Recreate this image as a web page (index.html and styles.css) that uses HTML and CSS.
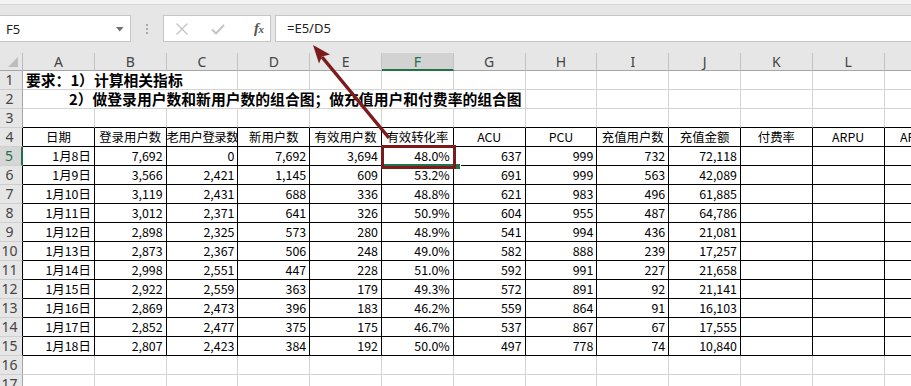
FILE: index.html
```html
<!DOCTYPE html>
<html lang="zh-CN">
<head>
<meta charset="utf-8">
<title>Excel</title>
<link rel="stylesheet" href="styles.css">
</head>
<body>
<div class="page">
  <div class="topstrip"></div>
  <div class="fbar">
    <div class="namebox">
      <span class="nb-text">F5</span>
      <svg class="nb-drop" width="8" height="5" viewBox="0 0 8 5"><path d="M0 0H7.5L3.75 4.5Z" fill="#6f6f6f"/></svg>
    </div>
    <div class="grip"><i></i><i></i><i></i></div>
    <div class="btnbox">
      <svg class="ico" width="14" height="12" viewBox="0 0 14 12"><path d="M1.5 0.5L12.5 11.5M12.5 0.5L1.5 11.5" stroke="#c4c4c4" stroke-width="1.3" fill="none"/></svg>
      <svg class="ico" width="14" height="12" viewBox="0 0 14 12"><path d="M1 6.5L5 10.5L13 2" stroke="#c4c4c4" stroke-width="2" fill="none"/></svg>
      <span class="fx">f<span class="fx-x">x</span></span>
    </div>
    <div class="formula">=E5/D5</div>
  </div>

  <div class="sheet">
    <!-- column headers -->
    <div class="corner"><svg width="10" height="10" viewBox="0 0 10 10"><path d="M10 0V10H0Z" fill="#bdbdbd"/></svg></div>
    <div class="ch">A</div><div class="ch">B</div><div class="ch">C</div><div class="ch">D</div><div class="ch">E</div><div class="ch sel">F</div><div class="ch">G</div><div class="ch">H</div><div class="ch">I</div><div class="ch">J</div><div class="ch">K</div><div class="ch">L</div><div class="ch">M</div>

    <!-- row 1 -->
    <div class="rh">1</div>
    <div class="c title s3">要求：1）计算相关指标</div>
    <div class="c"></div><div class="c"></div><div class="c"></div><div class="c"></div><div class="c"></div><div class="c"></div><div class="c"></div><div class="c"></div><div class="c"></div><div class="c"></div>

    <!-- row 2 -->
    <div class="rh">2</div>
    <div class="c title s7 indent">2）做登录用户数和新用户数的组合图；做充值用户和付费率的组合图</div>
    <div class="c"></div><div class="c"></div><div class="c"></div><div class="c"></div><div class="c"></div><div class="c"></div>

    <!-- row 3 -->
    <div class="rh">3</div>
    <div class="c tb"></div><div class="c tb"></div><div class="c tb"></div><div class="c tb"></div><div class="c tb"></div><div class="c tb"></div><div class="c tb"></div><div class="c tb"></div><div class="c tb"></div><div class="c tb"></div><div class="c tb"></div><div class="c tb"></div><div class="c tb"></div>

    <!-- row 4 -->
    <div class="rh tl">4</div>
    <div class="t ctr">日期</div><div class="t ctr">登录用户数</div><div class="t ctr tight">老用户登录数</div><div class="t ctr">新用户数</div><div class="t ctr">有效用户数</div><div class="t ctr">有效转化率</div><div class="t ctr">ACU</div><div class="t ctr">PCU</div><div class="t ctr">充值用户数</div><div class="t ctr">充值金额</div><div class="t ctr">付费率</div><div class="t ctr">ARPU</div><div class="t ctr">ARPPU</div>

    <!-- row 5 -->
    <div class="rh tl rsel">5</div>
    <div class="t r">1月8日</div><div class="t r">7,692</div><div class="t r">0</div><div class="t r">7,692</div><div class="t r">3,694</div><div class="t r">48.0%</div><div class="t r">637</div><div class="t r">999</div><div class="t r">732</div><div class="t r">72,118</div><div class="t"></div><div class="t"></div><div class="t"></div>

    <div class="rh tl">6</div>
    <div class="t r">1月9日</div><div class="t r">3,566</div><div class="t r">2,421</div><div class="t r">1,145</div><div class="t r">609</div><div class="t r">53.2%</div><div class="t r">691</div><div class="t r">999</div><div class="t r">563</div><div class="t r">42,089</div><div class="t"></div><div class="t"></div><div class="t"></div>

    <div class="rh tl">7</div>
    <div class="t r">1月10日</div><div class="t r">3,119</div><div class="t r">2,431</div><div class="t r">688</div><div class="t r">336</div><div class="t r">48.8%</div><div class="t r">621</div><div class="t r">983</div><div class="t r">496</div><div class="t r">61,885</div><div class="t"></div><div class="t"></div><div class="t"></div>

    <div class="rh tl">8</div>
    <div class="t r">1月11日</div><div class="t r">3,012</div><div class="t r">2,371</div><div class="t r">641</div><div class="t r">326</div><div class="t r">50.9%</div><div class="t r">604</div><div class="t r">955</div><div class="t r">487</div><div class="t r">64,786</div><div class="t"></div><div class="t"></div><div class="t"></div>

    <div class="rh tl">9</div>
    <div class="t r">1月12日</div><div class="t r">2,898</div><div class="t r">2,325</div><div class="t r">573</div><div class="t r">280</div><div class="t r">48.9%</div><div class="t r">541</div><div class="t r">994</div><div class="t r">436</div><div class="t r">21,081</div><div class="t"></div><div class="t"></div><div class="t"></div>

    <div class="rh tl">10</div>
    <div class="t r">1月13日</div><div class="t r">2,873</div><div class="t r">2,367</div><div class="t r">506</div><div class="t r">248</div><div class="t r">49.0%</div><div class="t r">582</div><div class="t r">888</div><div class="t r">239</div><div class="t r">17,257</div><div class="t"></div><div class="t"></div><div class="t"></div>

    <div class="rh tl">11</div>
    <div class="t r">1月14日</div><div class="t r">2,998</div><div class="t r">2,551</div><div class="t r">447</div><div class="t r">228</div><div class="t r">51.0%</div><div class="t r">592</div><div class="t r">991</div><div class="t r">227</div><div class="t r">21,658</div><div class="t"></div><div class="t"></div><div class="t"></div>

    <div class="rh tl">12</div>
    <div class="t r">1月15日</div><div class="t r">2,922</div><div class="t r">2,559</div><div class="t r">363</div><div class="t r">179</div><div class="t r">49.3%</div><div class="t r">572</div><div class="t r">891</div><div class="t r">92</div><div class="t r">21,141</div><div class="t"></div><div class="t"></div><div class="t"></div>

    <div class="rh tl">13</div>
    <div class="t r">1月16日</div><div class="t r">2,869</div><div class="t r">2,473</div><div class="t r">396</div><div class="t r">183</div><div class="t r">46.2%</div><div class="t r">559</div><div class="t r">864</div><div class="t r">91</div><div class="t r">16,103</div><div class="t"></div><div class="t"></div><div class="t"></div>

    <div class="rh tl">14</div>
    <div class="t r">1月17日</div><div class="t r">2,852</div><div class="t r">2,477</div><div class="t r">375</div><div class="t r">175</div><div class="t r">46.7%</div><div class="t r">537</div><div class="t r">867</div><div class="t r">67</div><div class="t r">17,555</div><div class="t"></div><div class="t"></div><div class="t"></div>

    <div class="rh tl">15</div>
    <div class="t r">1月18日</div><div class="t r">2,807</div><div class="t r">2,423</div><div class="t r">384</div><div class="t r">192</div><div class="t r">50.0%</div><div class="t r">497</div><div class="t r">778</div><div class="t r">74</div><div class="t r">10,840</div><div class="t"></div><div class="t"></div><div class="t"></div>

    <!-- row 16 -->
    <div class="rh">16</div>
    <div class="c"></div><div class="c"></div><div class="c"></div><div class="c"></div><div class="c"></div><div class="c"></div><div class="c"></div><div class="c"></div><div class="c"></div><div class="c"></div><div class="c"></div><div class="c"></div><div class="c"></div>

    <!-- row 17 -->
    <div class="rh">17</div>
    <div class="c"></div><div class="c"></div><div class="c"></div><div class="c"></div><div class="c"></div><div class="c"></div><div class="c"></div><div class="c"></div><div class="c"></div><div class="c"></div><div class="c"></div><div class="c"></div><div class="c"></div>
  </div>

  <!-- overlays: selection of F5, annotation box and arrow -->
  <div class="selbar"></div>
  <div class="handle"></div>
  <div class="redbox"></div>
  <svg class="arrow" width="911" height="386" viewBox="0 0 911 386">
    <line x1="389" y1="138" x2="322" y2="57" stroke="#7a1c1c" stroke-width="3.5"/>
    <path d="M313 45L330 54.4L322 56.5L319 63.4Z" fill="#7a1c1c"/>
  </svg>
</div>
</body>
</html>
```

FILE: styles.css
```css
html, body {
  margin: 0;
  padding: 0;
  background: #ffffff;
}

.page {
  position: relative;
  width: 911px;
  height: 386px;
  overflow: hidden;
  font-family: "Noto Sans CJK SC", "Noto Sans", sans-serif;
}

/* ---------- top toolbar ---------- */
.topstrip {
  height: 4px;
  background: #f3f3f3;
  border-bottom: 1px solid #d6d6d6;
}

.fbar {
  height: 48px;
  box-sizing: border-box;
  padding-top: 10px;
  background: #e6e6e6;
  display: flex;
  align-items: flex-start;
}

.namebox,
.btnbox,
.formula {
  height: 27px;
  box-sizing: border-box;
  background: #ffffff;
  border: 1px solid #c6c6c6;
}

.namebox {
  width: 131px;
  border-left: none;
  display: flex;
  align-items: center;
  justify-content: space-between;
  padding: 0 6px 0 6px;
}

.nb-text {
  font-family: "Noto Sans", sans-serif;
  font-size: 13px;
  color: #222;
}

.nb-drop {
  margin-top: 1px;
}

.grip {
  width: 32px;
  height: 27px;
  display: flex;
  flex-direction: column;
  align-items: center;
  justify-content: center;
  gap: 2px;
}

.grip i {
  display: block;
  width: 2px;
  height: 2px;
  background: #a9a9a9;
}

.btnbox {
  width: 108px;
  display: flex;
  align-items: center;
  padding-left: 11px;
  gap: 22px;
}

.fx {
  font-family: "Liberation Serif", serif;
  font-style: italic;
  font-weight: bold;
  font-size: 15px;
  color: #555;
  margin-left: 7px;
  letter-spacing: -0.5px;
}

.fx-x {
  font-size: 11px;
}

.formula {
  flex: 1;
  margin-left: 4px;
  border-right: none;
  padding-left: 11px;
  font-family: "Noto Sans", sans-serif;
  font-size: 13px;
  line-height: 25px;
  color: #222;
}

/* ---------- sheet grid ---------- */
.sheet {
  display: grid;
  grid-template-columns: 23px repeat(12, 71.8px) 72px;
  grid-template-rows: 18px repeat(17, 19px);
  width: 958px;
}

.sheet > div {
  box-sizing: border-box;
  overflow: hidden;
  white-space: nowrap;
}

.corner {
  background: #e6e6e6;
  border-right: 1px solid #bdbdbd;
  border-bottom: 1px solid #a6a6a6;
  display: flex;
  align-items: flex-end;
  justify-content: flex-end;
  padding: 0 4px 3px 0;
}

.ch {
  background: #e6e6e6;
  border-right: 1px solid #c4c4c4;
  border-bottom: 1px solid #a6a6a6;
  font-family: "Noto Sans", sans-serif;
  font-size: 14px;
  line-height: 17px;
  color: #444;
  text-align: center;
}

.ch.sel {
  background: #d2d2d2;
  color: #217346;
  border-bottom: 2px solid #217346;
}

.rh {
  background: #e6e6e6;
  border-right: 1px solid #a6a6a6;
  border-bottom: 1px solid #cfcfcf;
  font-family: "Noto Sans", sans-serif;
  font-size: 14px;
  line-height: 18px;
  color: #444;
  text-align: center;
  padding-right: 3px;
}

.rh.tl {
  border-right-color: #000;
}

.rh.rsel {
  background: #d6d6d6;
  color: #217346;
  border-right: 2px solid #217346;
}

.c,
.t {
  border-right: 1px solid #d4d4d4;
  border-bottom: 1px solid #d4d4d4;
  font-size: 12.4px;
  line-height: 18px;
  color: #000;
}

.t {
  border-right-color: #000;
  border-bottom-color: #000;
}

.c.tb {
  border-bottom-color: #000;
}

.r {
  text-align: right;
  padding-right: 3px;
}

.ctr {
  text-align: center;
}

.tight {
  letter-spacing: -0.45px;
}

.title {
  font-size: 14.8px;
  font-weight: bold;
  line-height: 18px;
  padding-left: 3px;
}

.title.indent {
  padding-left: 46px;
}

.s3 {
  grid-column: span 3;
}

.s7 {
  grid-column: span 7;
}

/* ---------- overlays ---------- */
.selbar {
  position: absolute;
  left: 383px;
  top: 164px;
  width: 72px;
  height: 2px;
  background: #217346;
}

.handle {
  position: absolute;
  left: 454px;
  top: 163px;
  width: 5px;
  height: 5px;
  background: #217346;
  border: 1px solid #fff;
}

.redbox {
  position: absolute;
  left: 381px;
  top: 145px;
  width: 75px;
  height: 24px;
  box-sizing: border-box;
  border: 3px solid #7a1c1c;
}

.arrow {
  position: absolute;
  left: 0;
  top: 0;
  pointer-events: none;
}
```
